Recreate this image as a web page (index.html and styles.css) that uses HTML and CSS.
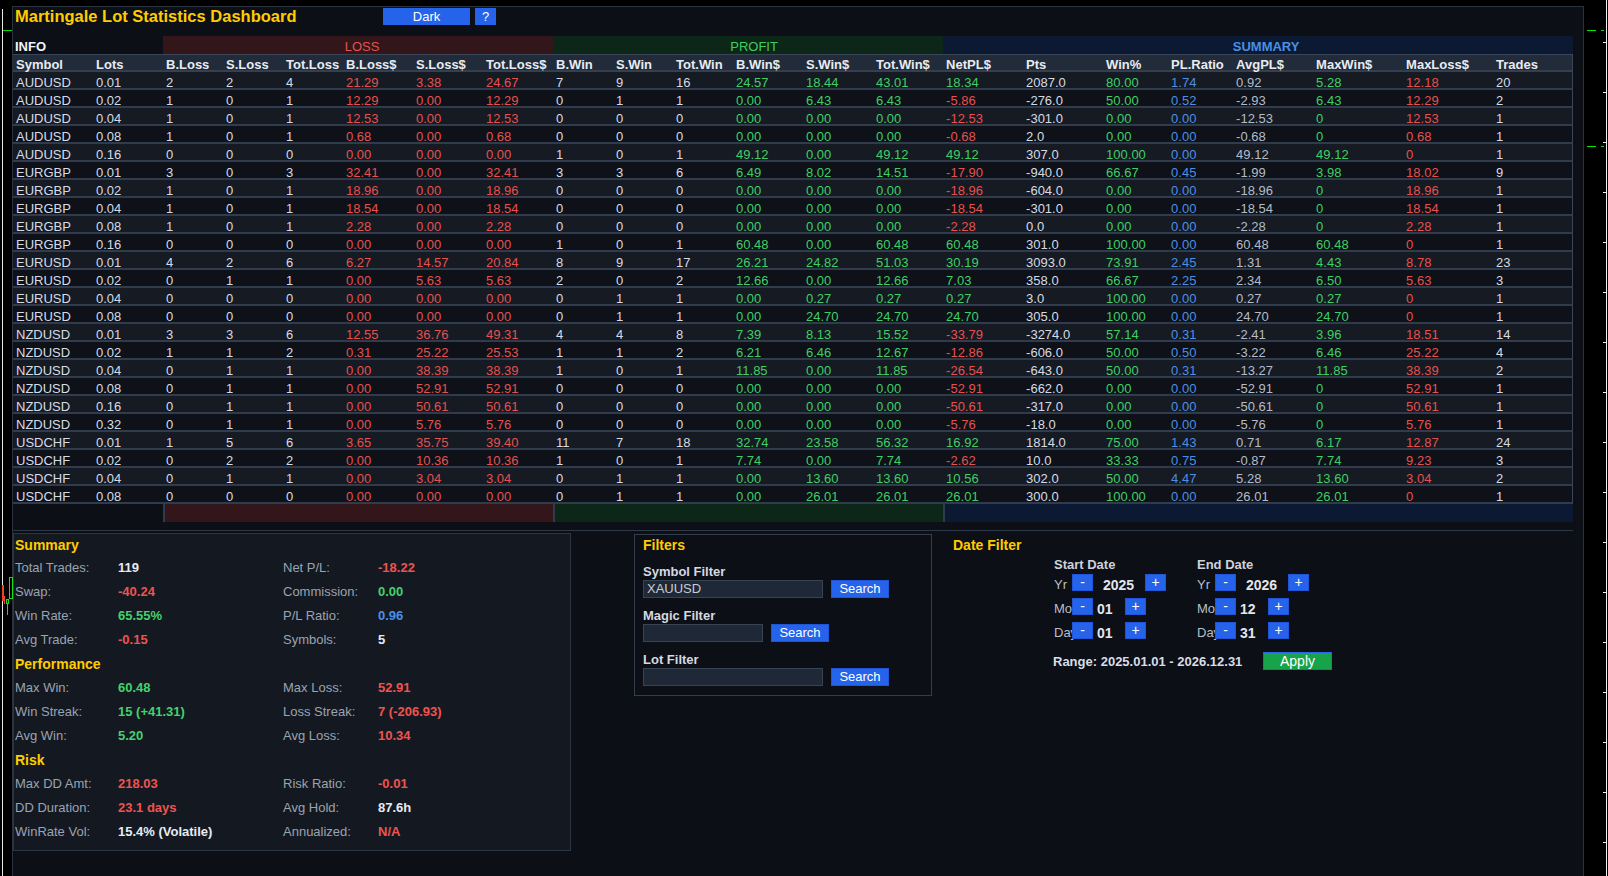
FILE: index.html
```html
<!DOCTYPE html>
<html lang="en">
<head>
<meta charset="utf-8">
<title>Martingale Lot Statistics Dashboard</title>
<link rel="stylesheet" href="styles.css">
</head>
<body>
<div class="deco left-line"></div>
<div class="deco left-price"></div>
<div class="deco candle c-red"></div>
<div class="deco candle c-red2"></div>
<div class="deco candle c-green"></div>
<div class="deco candle c-green-small"></div>
<div class="deco candle c-wick"></div>
<div class="deco scale-line"></div>
<div class="deco scale-ticks"></div>
<div class="deco dash d1a"></div>
<div class="deco dash d1b"></div>
<div class="deco dash d2a"></div>
<div class="deco dash d2b"></div>

<div class="panel">
  <div class="titlebar">
    <div class="title">Martingale Lot Statistics Dashboard</div>
    <button class="tbtn mode">Dark</button>
    <button class="tbtn help">?</button>
  </div>

  <table class="stats">
    <colgroup>
      <col class="w80"><col class="w70">
      <col class="w60"><col class="w60"><col class="w60"><col class="w70"><col class="w70"><col class="w70">
      <col class="w60"><col class="w60"><col class="w60"><col class="w70"><col class="w70"><col class="w70">
      <col class="w80"><col class="w80"><col class="w65"><col class="w65"><col class="w80"><col class="w90"><col class="w90"><col class="w80">
    </colgroup>
    <thead>
      <tr class="groups">
        <th colspan="2" class="g-info">INFO</th>
        <th colspan="6" class="g-loss">LOSS</th>
        <th colspan="6" class="g-profit">PROFIT</th>
        <th colspan="8" class="g-summary">SUMMARY</th>
      </tr>
      <tr class="heads">
        <th>Symbol</th><th>Lots</th><th>B.Loss</th><th>S.Loss</th><th>Tot.Loss</th><th>B.Loss$</th><th>S.Loss$</th><th>Tot.Loss$</th>
        <th>B.Win</th><th>S.Win</th><th>Tot.Win</th><th>B.Win$</th><th>S.Win$</th><th>Tot.Win$</th>
        <th>NetPL$</th><th>Pts</th><th>Win%</th><th>PL.Ratio</th><th>AvgPL$</th><th>MaxWin$</th><th>MaxLoss$</th><th>Trades</th>
      </tr>
    </thead>
    <tbody>
      <tr><td>AUDUSD</td><td>0.01</td><td>2</td><td>2</td><td>4</td><td>21.29</td><td>3.38</td><td>24.67</td><td>7</td><td>9</td><td>16</td><td>24.57</td><td>18.44</td><td>43.01</td><td>18.34</td><td>2087.0</td><td>80.00</td><td>1.74</td><td>0.92</td><td>5.28</td><td>12.18</td><td>20</td></tr>
      <tr><td>AUDUSD</td><td>0.02</td><td>1</td><td>0</td><td>1</td><td>12.29</td><td>0.00</td><td>12.29</td><td>0</td><td>1</td><td>1</td><td>0.00</td><td>6.43</td><td>6.43</td><td class="n">-5.86</td><td>-276.0</td><td>50.00</td><td>0.52</td><td>-2.93</td><td>6.43</td><td>12.29</td><td>2</td></tr>
      <tr><td>AUDUSD</td><td>0.04</td><td>1</td><td>0</td><td>1</td><td>12.53</td><td>0.00</td><td>12.53</td><td>0</td><td>0</td><td>0</td><td>0.00</td><td>0.00</td><td>0.00</td><td class="n">-12.53</td><td>-301.0</td><td>0.00</td><td>0.00</td><td>-12.53</td><td>0</td><td>12.53</td><td>1</td></tr>
      <tr><td>AUDUSD</td><td>0.08</td><td>1</td><td>0</td><td>1</td><td>0.68</td><td>0.00</td><td>0.68</td><td>0</td><td>0</td><td>0</td><td>0.00</td><td>0.00</td><td>0.00</td><td class="n">-0.68</td><td>2.0</td><td>0.00</td><td>0.00</td><td>-0.68</td><td>0</td><td>0.68</td><td>1</td></tr>
      <tr><td>AUDUSD</td><td>0.16</td><td>0</td><td>0</td><td>0</td><td>0.00</td><td>0.00</td><td>0.00</td><td>1</td><td>0</td><td>1</td><td>49.12</td><td>0.00</td><td>49.12</td><td>49.12</td><td>307.0</td><td>100.00</td><td>0.00</td><td>49.12</td><td>49.12</td><td>0</td><td>1</td></tr>
      <tr><td>EURGBP</td><td>0.01</td><td>3</td><td>0</td><td>3</td><td>32.41</td><td>0.00</td><td>32.41</td><td>3</td><td>3</td><td>6</td><td>6.49</td><td>8.02</td><td>14.51</td><td class="n">-17.90</td><td>-940.0</td><td>66.67</td><td>0.45</td><td>-1.99</td><td>3.98</td><td>18.02</td><td>9</td></tr>
      <tr><td>EURGBP</td><td>0.02</td><td>1</td><td>0</td><td>1</td><td>18.96</td><td>0.00</td><td>18.96</td><td>0</td><td>0</td><td>0</td><td>0.00</td><td>0.00</td><td>0.00</td><td class="n">-18.96</td><td>-604.0</td><td>0.00</td><td>0.00</td><td>-18.96</td><td>0</td><td>18.96</td><td>1</td></tr>
      <tr><td>EURGBP</td><td>0.04</td><td>1</td><td>0</td><td>1</td><td>18.54</td><td>0.00</td><td>18.54</td><td>0</td><td>0</td><td>0</td><td>0.00</td><td>0.00</td><td>0.00</td><td class="n">-18.54</td><td>-301.0</td><td>0.00</td><td>0.00</td><td>-18.54</td><td>0</td><td>18.54</td><td>1</td></tr>
      <tr><td>EURGBP</td><td>0.08</td><td>1</td><td>0</td><td>1</td><td>2.28</td><td>0.00</td><td>2.28</td><td>0</td><td>0</td><td>0</td><td>0.00</td><td>0.00</td><td>0.00</td><td class="n">-2.28</td><td>0.0</td><td>0.00</td><td>0.00</td><td>-2.28</td><td>0</td><td>2.28</td><td>1</td></tr>
      <tr><td>EURGBP</td><td>0.16</td><td>0</td><td>0</td><td>0</td><td>0.00</td><td>0.00</td><td>0.00</td><td>1</td><td>0</td><td>1</td><td>60.48</td><td>0.00</td><td>60.48</td><td>60.48</td><td>301.0</td><td>100.00</td><td>0.00</td><td>60.48</td><td>60.48</td><td>0</td><td>1</td></tr>
      <tr><td>EURUSD</td><td>0.01</td><td>4</td><td>2</td><td>6</td><td>6.27</td><td>14.57</td><td>20.84</td><td>8</td><td>9</td><td>17</td><td>26.21</td><td>24.82</td><td>51.03</td><td>30.19</td><td>3093.0</td><td>73.91</td><td>2.45</td><td>1.31</td><td>4.43</td><td>8.78</td><td>23</td></tr>
      <tr><td>EURUSD</td><td>0.02</td><td>0</td><td>1</td><td>1</td><td>0.00</td><td>5.63</td><td>5.63</td><td>2</td><td>0</td><td>2</td><td>12.66</td><td>0.00</td><td>12.66</td><td>7.03</td><td>358.0</td><td>66.67</td><td>2.25</td><td>2.34</td><td>6.50</td><td>5.63</td><td>3</td></tr>
      <tr><td>EURUSD</td><td>0.04</td><td>0</td><td>0</td><td>0</td><td>0.00</td><td>0.00</td><td>0.00</td><td>0</td><td>1</td><td>1</td><td>0.00</td><td>0.27</td><td>0.27</td><td>0.27</td><td>3.0</td><td>100.00</td><td>0.00</td><td>0.27</td><td>0.27</td><td>0</td><td>1</td></tr>
      <tr><td>EURUSD</td><td>0.08</td><td>0</td><td>0</td><td>0</td><td>0.00</td><td>0.00</td><td>0.00</td><td>0</td><td>1</td><td>1</td><td>0.00</td><td>24.70</td><td>24.70</td><td>24.70</td><td>305.0</td><td>100.00</td><td>0.00</td><td>24.70</td><td>24.70</td><td>0</td><td>1</td></tr>
      <tr><td>NZDUSD</td><td>0.01</td><td>3</td><td>3</td><td>6</td><td>12.55</td><td>36.76</td><td>49.31</td><td>4</td><td>4</td><td>8</td><td>7.39</td><td>8.13</td><td>15.52</td><td class="n">-33.79</td><td>-3274.0</td><td>57.14</td><td>0.31</td><td>-2.41</td><td>3.96</td><td>18.51</td><td>14</td></tr>
      <tr><td>NZDUSD</td><td>0.02</td><td>1</td><td>1</td><td>2</td><td>0.31</td><td>25.22</td><td>25.53</td><td>1</td><td>1</td><td>2</td><td>6.21</td><td>6.46</td><td>12.67</td><td class="n">-12.86</td><td>-606.0</td><td>50.00</td><td>0.50</td><td>-3.22</td><td>6.46</td><td>25.22</td><td>4</td></tr>
      <tr><td>NZDUSD</td><td>0.04</td><td>0</td><td>1</td><td>1</td><td>0.00</td><td>38.39</td><td>38.39</td><td>1</td><td>0</td><td>1</td><td>11.85</td><td>0.00</td><td>11.85</td><td class="n">-26.54</td><td>-643.0</td><td>50.00</td><td>0.31</td><td>-13.27</td><td>11.85</td><td>38.39</td><td>2</td></tr>
      <tr><td>NZDUSD</td><td>0.08</td><td>0</td><td>1</td><td>1</td><td>0.00</td><td>52.91</td><td>52.91</td><td>0</td><td>0</td><td>0</td><td>0.00</td><td>0.00</td><td>0.00</td><td class="n">-52.91</td><td>-662.0</td><td>0.00</td><td>0.00</td><td>-52.91</td><td>0</td><td>52.91</td><td>1</td></tr>
      <tr><td>NZDUSD</td><td>0.16</td><td>0</td><td>1</td><td>1</td><td>0.00</td><td>50.61</td><td>50.61</td><td>0</td><td>0</td><td>0</td><td>0.00</td><td>0.00</td><td>0.00</td><td class="n">-50.61</td><td>-317.0</td><td>0.00</td><td>0.00</td><td>-50.61</td><td>0</td><td>50.61</td><td>1</td></tr>
      <tr><td>NZDUSD</td><td>0.32</td><td>0</td><td>1</td><td>1</td><td>0.00</td><td>5.76</td><td>5.76</td><td>0</td><td>0</td><td>0</td><td>0.00</td><td>0.00</td><td>0.00</td><td class="n">-5.76</td><td>-18.0</td><td>0.00</td><td>0.00</td><td>-5.76</td><td>0</td><td>5.76</td><td>1</td></tr>
      <tr><td>USDCHF</td><td>0.01</td><td>1</td><td>5</td><td>6</td><td>3.65</td><td>35.75</td><td>39.40</td><td>11</td><td>7</td><td>18</td><td>32.74</td><td>23.58</td><td>56.32</td><td>16.92</td><td>1814.0</td><td>75.00</td><td>1.43</td><td>0.71</td><td>6.17</td><td>12.87</td><td>24</td></tr>
      <tr><td>USDCHF</td><td>0.02</td><td>0</td><td>2</td><td>2</td><td>0.00</td><td>10.36</td><td>10.36</td><td>1</td><td>0</td><td>1</td><td>7.74</td><td>0.00</td><td>7.74</td><td class="n">-2.62</td><td>10.0</td><td>33.33</td><td>0.75</td><td>-0.87</td><td>7.74</td><td>9.23</td><td>3</td></tr>
      <tr><td>USDCHF</td><td>0.04</td><td>0</td><td>1</td><td>1</td><td>0.00</td><td>3.04</td><td>3.04</td><td>0</td><td>1</td><td>1</td><td>0.00</td><td>13.60</td><td>13.60</td><td>10.56</td><td>302.0</td><td>50.00</td><td>4.47</td><td>5.28</td><td>13.60</td><td>3.04</td><td>2</td></tr>
      <tr><td>USDCHF</td><td>0.08</td><td>0</td><td>0</td><td>0</td><td>0.00</td><td>0.00</td><td>0.00</td><td>0</td><td>1</td><td>1</td><td>0.00</td><td>26.01</td><td>26.01</td><td>26.01</td><td>300.0</td><td>100.00</td><td>0.00</td><td>26.01</td><td>26.01</td><td>0</td><td>1</td></tr>
    </tbody>
    <tfoot>
      <tr class="footbar">
        <td colspan="2" class="f-info"></td>
        <td colspan="6" class="f-loss"></td>
        <td colspan="6" class="f-profit"></td>
        <td colspan="8" class="f-summary"></td>
      </tr>
    </tfoot>
  </table>

  <div class="divider"></div>

  <div class="bottom">
    <section class="summary">
      <h2 class="sec-title span4">Summary</h2>
      <span class="lbl">Total Trades:</span><span class="val w">119</span>
      <span class="lbl">Net P/L:</span><span class="val r">-18.22</span>
      <span class="lbl">Swap:</span><span class="val r">-40.24</span>
      <span class="lbl">Commission:</span><span class="val g">0.00</span>
      <span class="lbl">Win Rate:</span><span class="val g">65.55%</span>
      <span class="lbl">P/L Ratio:</span><span class="val b">0.96</span>
      <span class="lbl">Avg Trade:</span><span class="val r">-0.15</span>
      <span class="lbl">Symbols:</span><span class="val w">5</span>
      <h2 class="sec-title span4">Performance</h2>
      <span class="lbl">Max Win:</span><span class="val g">60.48</span>
      <span class="lbl">Max Loss:</span><span class="val r">52.91</span>
      <span class="lbl">Win Streak:</span><span class="val g">15 (+41.31)</span>
      <span class="lbl">Loss Streak:</span><span class="val r">7 (-206.93)</span>
      <span class="lbl">Avg Win:</span><span class="val g">5.20</span>
      <span class="lbl">Avg Loss:</span><span class="val r">10.34</span>
      <h2 class="sec-title span4">Risk</h2>
      <span class="lbl">Max DD Amt:</span><span class="val r">218.03</span>
      <span class="lbl">Risk Ratio:</span><span class="val r">-0.01</span>
      <span class="lbl">DD Duration:</span><span class="val r">23.1 days</span>
      <span class="lbl">Avg Hold:</span><span class="val w">87.6h</span>
      <span class="lbl">WinRate Vol:</span><span class="val w">15.4% (Volatile)</span>
      <span class="lbl">Annualized:</span><span class="val r">N/A</span>
    </section>

    <section class="filters">
      <h2 class="sec-title ftitle">Filters</h2>
      <div class="fgroup">
        <div class="flabel">Symbol Filter</div>
        <div class="frow"><div class="finput wide">XAUUSD</div><button class="sbtn">Search</button></div>
      </div>
      <div class="fgroup">
        <div class="flabel">Magic Filter</div>
        <div class="frow"><div class="finput narrow"></div><button class="sbtn">Search</button></div>
      </div>
      <div class="fgroup">
        <div class="flabel">Lot Filter</div>
        <div class="frow"><div class="finput wide"></div><button class="sbtn">Search</button></div>
      </div>
    </section>

    <section class="datefilter">
      <h2 class="sec-title dtitle">Date Filter</h2>
      <div class="date-cols">
        <div class="date-col">
          <div class="date-head">Start Date</div>
          <div class="date-row"><span class="dlabel">Yr</span><button class="step">-</button><span class="dval yr">2025</span><button class="step">+</button></div>
          <div class="date-row"><span class="dlabel">Mo</span><button class="step">-</button><span class="dval md">01</span><button class="step">+</button></div>
          <div class="date-row"><span class="dlabel">Day</span><button class="step">-</button><span class="dval md">01</span><button class="step">+</button></div>
        </div>
        <div class="date-col">
          <div class="date-head">End Date</div>
          <div class="date-row"><span class="dlabel">Yr</span><button class="step">-</button><span class="dval yr">2026</span><button class="step">+</button></div>
          <div class="date-row"><span class="dlabel">Mo</span><button class="step">-</button><span class="dval md">12</span><button class="step">+</button></div>
          <div class="date-row"><span class="dlabel">Day</span><button class="step">-</button><span class="dval md">31</span><button class="step">+</button></div>
        </div>
      </div>
      <div class="range-row"><span class="range">Range: 2025.01.01 - 2026.12.31</span><button class="apply">Apply</button></div>
    </section>
  </div>
</div>
</body>
</html>
```

FILE: styles.css
```css
* { box-sizing: border-box; }
html, body { margin: 0; padding: 0; }
body {
  width: 1608px;
  height: 876px;
  overflow: hidden;
  position: relative;
  background: #000;
  font-family: "Liberation Sans", Arial, sans-serif;
  font-size: 13px;
  color: #d8dee8;
}
button { font-family: "Liberation Sans", Arial, sans-serif; padding: 0; margin: 0; cursor: pointer; }
h2 { margin: 0; font-weight: bold; }

/* chart decorations around the panel */
.deco { position: absolute; }
.left-line { left: 2px; top: 9px; width: 1px; height: 867px; background: #e8e8e8; }
.left-price { left: 3px; top: 30px; width: 9px; height: 1px; background: #00e000; }
.candle.c-red { left: 2px; top: 585px; width: 2px; height: 16px; background: #e8442a; }
.candle.c-red2 { left: 4px; top: 596px; width: 1px; height: 8px; background: #e8442a; }
.candle.c-green { left: 9px; top: 577px; width: 4px; height: 22px; border: 1px solid #16e016; }
.candle.c-green-small { left: 6px; top: 599px; width: 3px; height: 5px; border: 1px solid #16e016; }
.candle.c-wick { left: 7px; top: 604px; width: 1px; height: 11px; background: #16e016; }
.scale-line { left: 1606px; top: 0; width: 1px; height: 876px; background: #f0f0f0; }
.scale-ticks {
  left: 1603px; top: 0; width: 3px; height: 876px;
  background: repeating-linear-gradient(to bottom, transparent 0, transparent 42px, #f0f0f0 42px, #f0f0f0 43px, transparent 43px, transparent 50px);
}
.dash { height: 1px; background: #00e600; }
.d1a { left: 1587px; top: 30px; width: 9px; }
.d1b { left: 1601px; top: 30px; width: 3px; }
.d2a { left: 1587px; top: 146px; width: 9px; }
.d2b { left: 1601px; top: 146px; width: 3px; }

/* panel */
.panel {
  margin: 6px 0 0 12px;
  width: 1572px;
  height: 870px;
  border: 1px solid #2a323e;
  border-bottom: none;
  background: #0c0f16;
}
.titlebar { display: flex; align-items: flex-start; height: 29px; }
.title {
  width: 370px;
  padding-left: 2px;
  font-size: 16.5px;
  font-weight: bold;
  line-height: 18px;
  color: #ffcc00;
}
.tbtn {
  margin-top: 1px;
  height: 17px;
  border: none;
  background: #2563eb;
  color: #fff;
  font-size: 13px;
  line-height: 17px;
  text-align: center;
}
.tbtn.mode { width: 87px; }
.tbtn.help { width: 21px; margin-left: 5px; }

/* stats table */
.stats {
  border-collapse: separate;
  border-spacing: 0;
  table-layout: fixed;
  width: 1560px;
}
.w60 { width: 60px; } .w65 { width: 65px; } .w70 { width: 70px; }
.w80 { width: 80px; } .w90 { width: 90px; }
.stats th, .stats td {
  padding: 0 0 0 3px;
  text-align: left;
  white-space: nowrap;
  vertical-align: top;
}
.stats tr { height: 18px; }
.groups th {
  padding-top: 5px;
  line-height: 12px;
  font-weight: normal;
}
.groups .g-info { font-weight: bold; color: #f2f4f7; padding-left: 2px; }
.groups .g-loss { background: #321619; color: #e25252; text-align: center; padding-left: 8px; }
.groups .g-profit { background: #0c2617; color: #3dcf5e; text-align: center; padding-left: 12px; }
.groups .g-summary { background: #0b1a32; color: #4b8fe2; text-align: center; padding-left: 16px; font-weight: bold; }
.heads th {
  background: #212b3a;
  border-top: 1px solid #3a4658;
  border-bottom: 2px solid #34404f;
  padding-top: 5px;
  line-height: 10px;
  font-weight: bold;
  color: #e8ecf2;
}
.heads th:last-child { border-right: 1px solid #3a4658; }
.stats tbody td {
  padding-top: 6px;
  line-height: 10px;
  border-bottom: 2px solid #303c4d;
  color: #d6dce6;
}
.stats tbody td:last-child { border-right: 1px solid #3a4658; }
.stats tbody tr:nth-child(odd) td { background: #161a22; }
.stats tbody tr:nth-child(even) td { background: #0e1118; }
.stats tbody td:nth-child(6),
.stats tbody td:nth-child(7),
.stats tbody td:nth-child(8),
.stats tbody td:nth-child(21) { color: #e5514f; }
.stats tbody td:nth-child(12),
.stats tbody td:nth-child(13),
.stats tbody td:nth-child(14),
.stats tbody td:nth-child(15),
.stats tbody td:nth-child(17),
.stats tbody td:nth-child(20) { color: #3fcf66; }
.stats tbody td.n { color: #e5514f; }
.stats tbody td:nth-child(18) { color: #4b8fe2; }
.stats tbody td:nth-child(19) { color: #b4bcc8; }
.footbar td { padding: 0; }
.footbar .f-loss { background: #321619; border-left: 2px solid #2f3a4a; }
.footbar .f-profit { background: #0c2617; border-left: 2px solid #2f3a4a; }
.footbar .f-summary { background: #0b1a32; border-left: 2px solid #2f3a4a; }

.divider { margin-top: 8px; width: 1560px; height: 1px; background: #2e3846; }

/* bottom area */
.bottom { display: flex; align-items: flex-start; }
.sec-title { font-size: 14px; color: #ffcc00; }

.summary {
  margin-top: 2px;
  width: 558px;
  height: 318px;
  border: 1px solid #2c3542;
  background: #141921;
  padding-left: 1px;
  display: grid;
  grid-template-columns: 103px 165px 95px 1fr;
  grid-template-rows: 22px;
  grid-auto-rows: 24px;
  align-content: start;
  align-items: center;
}
.summary .span4 { grid-column: 1 / -1; line-height: 16px; }
.lbl { color: #9aa3b2; line-height: 16px; }
.val { font-weight: bold; line-height: 16px; }
.val.w { color: #e6ebf2; }
.val.r { color: #ef5350; }
.val.g { color: #44d16e; }
.val.b { color: #4b8fe6; }

.filters {
  margin-top: 3px;
  margin-left: 63px;
  width: 298px;
  border: 1px solid #343d4b;
  padding: 0 0 9px 8px;
}
.ftitle { height: 20px; line-height: 20px; }
.fgroup { margin-top: 9px; }
.fgroup:first-of-type { margin-top: 8px; }
.flabel { height: 17px; line-height: 17px; font-weight: bold; color: #d4d9e2; }
.frow { display: flex; height: 18px; }
.finput {
  height: 18px;
  background: #1f2836;
  border: 1px solid #384354;
  color: #c7ccd5;
  padding-left: 3px;
  line-height: 16px;
  font-size: 13px;
}
.finput.wide { width: 180px; }
.finput.narrow { width: 120px; }
.sbtn {
  margin-left: 8px;
  width: 58px;
  height: 18px;
  background: #2563eb;
  border: 1px solid #1f55d6;
  color: #fff;
  font-size: 13px;
  line-height: 16px;
}

.datefilter { margin-top: 2px; margin-left: 21px; width: 400px; }
.dtitle { height: 24px; line-height: 24px; }
.date-cols { display: flex; margin-left: 101px; }
.date-col { width: 143px; }
.date-head { height: 16px; line-height: 16px; font-weight: bold; color: #cdd2db; }
.date-row { display: flex; align-items: flex-start; height: 17px; margin-top: 7px; }
.date-head + .date-row { margin-top: 1px; }
.dlabel { width: 18px; white-space: nowrap; margin-top: 4px; line-height: 13px; color: #b9bfca; }
.step {
  width: 21px;
  height: 17px;
  background: #2563eb;
  border: 1px solid #1f55d6;
  color: #fff;
  font-size: 14px;
  line-height: 15px;
  text-align: center;
}
.dval { margin-top: 4px; line-height: 15px; font-size: 14px; font-weight: bold; color: #e2e6ec; }
.dval.yr { margin-left: 10px; width: 42px; }
.dval.md { margin-left: 4px; width: 28px; }
.range-row { display: flex; align-items: flex-start; margin-top: 13px; margin-left: 100px; }
.range { width: 210px; line-height: 18px; margin-top: 1px; font-weight: bold; color: #d8dde6; }
.apply {
  width: 69px;
  height: 18px;
  background: #16a34a;
  border: 1px solid #2563eb;
  color: #fff;
  font-size: 14px;
  line-height: 16px;
}
```
